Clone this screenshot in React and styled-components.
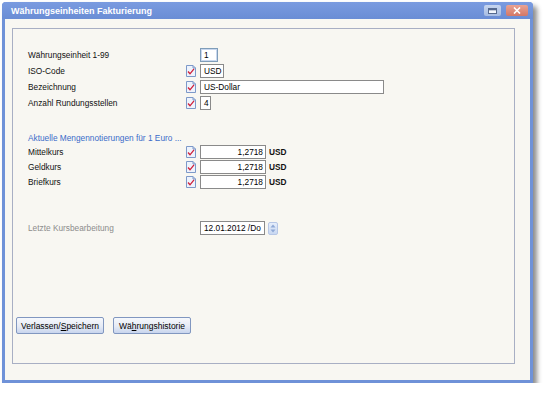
import React from "react";
import styled, { createGlobalStyle } from "styled-components";

const GlobalStyle = createGlobalStyle`
  body {
    margin: 0;
    background: #ffffff;
    font-family: "Liberation Sans", Arial, sans-serif;
  }
`;

const Window = styled.div`
  margin: 2px 0 0 2px;
  width: 531px;
  height: 381px;
  box-sizing: border-box;
  border: 3px solid #6f92d8;
  border-top: none;
  border-radius: 4px 4px 0 0;
  background: #f8f7f2;
  box-shadow: 4px 4px 5px rgba(0, 0, 0, 0.45);
  display: flex;
  flex-direction: column;
`;

const TitleBar = styled.div`
  height: 17px;
  margin: 0 -3px;
  padding: 0 5px 0 9px;
  background: linear-gradient(#7a9be0, #6a8dd5);
  border-radius: 4px 4px 0 0;
  display: flex;
  align-items: center;
  justify-content: space-between;
  color: #ffffff;
  font-size: 9px;
  font-weight: bold;
`;

const TitleButtons = styled.div`
  display: flex;
  gap: 5px;
  align-items: center;
`;

const TitleButton = styled.div`
  width: ${(p) => (p.$close ? "22px" : "17px")};
  height: 11px;
  border-radius: 2px;
  background: ${(p) =>
    p.$close
      ? "linear-gradient(#e9a393, #d47766)"
      : "linear-gradient(#c6d5ef, #a6bbe2)"};
  display: flex;
  align-items: center;
  justify-content: center;
`;

const Body = styled.div`
  flex: 1;
  padding: 9px 15px 16px 7px;
  display: flex;
`;

const Panel = styled.div`
  flex: 1;
  border: 1px solid #a8afc4;
  padding: 18px 3px 0 3px;
  display: flex;
  flex-direction: column;
`;

const Form = styled.div`
  padding-left: 12px;
  display: flex;
  flex-direction: column;
`;

const Row = styled.div`
  height: ${(p) => p.$h || 16}px;
  display: grid;
  grid-template-columns: 154px 10px auto;
  column-gap: 4px;
  align-items: center;
  font-size: 8.3px;
  color: #111111;
`;

const Label = styled.span`
  color: ${(p) => (p.$muted ? "#8c8c8c" : "#111111")};
`;

const Heading = styled.div`
  margin-top: 21px;
  height: 12px;
  display: flex;
  align-items: center;
  font-size: 8.3px;
  color: #3b6cc9;
`;

const Field = styled.div`
  grid-column: 3;
  display: flex;
  align-items: center;
  gap: 3px;
`;

const Box = styled.div`
  width: ${(p) => p.$w}px;
  height: 14px;
  box-sizing: border-box;
  border: 1px solid ${(p) => (p.$focus ? "#7f9db9" : "#8a8a8a")};
  background: #ffffff;
  padding: 0 2px 0 3px;
  display: flex;
  align-items: center;
  justify-content: ${(p) => (p.$right ? "flex-end" : "flex-start")};
  font-size: 8.3px;
  color: #000000;
  white-space: nowrap;
  overflow: hidden;
  box-shadow: ${(p) => (p.$focus ? "inset 0 0 0 1px #c9d8ef" : "none")};
`;

const Unit = styled.span`
  font-weight: bold;
  font-size: 8.3px;
`;

const Spin = styled.div`
  width: 10px;
  height: 13px;
  box-sizing: border-box;
  border: 1px solid #b7c7e6;
  border-radius: 2px;
  background: linear-gradient(#e6eefb, #c9d8f2);
  display: flex;
  align-items: center;
  justify-content: center;
`;

const DateRow = styled(Row)`
  margin-top: 31px;
`;

const Buttons = styled.div`
  margin-top: 81px;
  display: flex;
  gap: 9px;
`;

const Button = styled.button`
  height: 17px;
  width: ${(p) => p.$w}px;
  padding: 0;
  border: 1px solid #8197c0;
  border-radius: 2px;
  background: linear-gradient(#f6f8fc 0%, #e6ebf5 55%, #c8d5ee 100%);
  font-family: "Liberation Sans", Arial, sans-serif;
  font-size: 8.5px;
  color: #000000;
  u {
    text-decoration: underline;
  }
`;

function CheckIcon() {
  return (
    <svg width="10" height="12" viewBox="0 0 10 12">
      <path d="M0.5 0.5h6.5l2.5 2.5v8.5h-9z" fill="#eef3fc" stroke="#7d99c9" />
      <path d="M7 0.5v2.5h2.5" fill="none" stroke="#7d99c9" />
      <path d="M2 6.5l2 2.3l4-5" fill="none" stroke="#d0203a" strokeWidth="1.3" />
    </svg>
  );
}

function SpinIcon() {
  return (
    <svg width="6" height="9" viewBox="0 0 6 9">
      <path d="M3 0.5l2.5 3h-5z" fill="#8fa9d6" />
      <path d="M3 8.5l2.5-3h-5z" fill="#8fa9d6" />
    </svg>
  );
}

const rates = ["Mittelkurs", "Geldkurs", "Briefkurs"];

export default function App() {
  return (
    <>
      <GlobalStyle />
      <Window>
        <TitleBar>
          <span>Währungseinheiten Fakturierung</span>
          <TitleButtons>
            <TitleButton>
              <svg width="9" height="6" viewBox="0 0 9 6">
                <rect x="0.5" y="0.5" width="8" height="5" fill="#f4f7fd" stroke="#55698f" />
                <rect x="1" y="1" width="7" height="1.3" fill="#55698f" />
              </svg>
            </TitleButton>
            <TitleButton $close>
              <svg width="8" height="7" viewBox="0 0 8 7">
                <path d="M1 0.5l6 6M7 0.5l-6 6" stroke="#ffffff" strokeWidth="1.6" />
              </svg>
            </TitleButton>
          </TitleButtons>
        </TitleBar>
        <Body>
          <Panel>
            <Form>
              <Row>
                <Label>Währungseinheit 1-99</Label>
                <Field>
                  <Box $w={18} $focus>1</Box>
                </Field>
              </Row>
              <Row>
                <Label>ISO-Code</Label>
                <CheckIcon />
                <Field>
                  <Box $w={24}>USD</Box>
                </Field>
              </Row>
              <Row>
                <Label>Bezeichnung</Label>
                <CheckIcon />
                <Field>
                  <Box $w={184}>US-Dollar</Box>
                </Field>
              </Row>
              <Row>
                <Label>Anzahl Rundungsstellen</Label>
                <CheckIcon />
                <Field>
                  <Box $w={11}>4</Box>
                </Field>
              </Row>

              <Heading>Aktuelle Mengennotierungen für 1 Euro ...</Heading>
              {rates.map((r) => (
                <Row key={r} $h={15}>
                  <Label>{r}</Label>
                  <CheckIcon />
                  <Field>
                    <Box $w={66} $right>
                      1,2718
                    </Box>
                    <Unit>USD</Unit>
                  </Field>
                </Row>
              ))}

              <DateRow>
                <Label $muted>Letzte Kursbearbeitung</Label>
                <span />
                <Field>
                  <Box $w={65}>12.01.2012 /Do</Box>
                  <Spin>
                    <SpinIcon />
                  </Spin>
                </Field>
              </DateRow>
            </Form>
            <Buttons>
              <Button $w={88}>
                Verlassen/<u>S</u>peichern
              </Button>
              <Button $w={78}>
                Wä<u>h</u>rungshistorie
              </Button>
            </Buttons>
          </Panel>
        </Body>
      </Window>
    </>
  );
}
